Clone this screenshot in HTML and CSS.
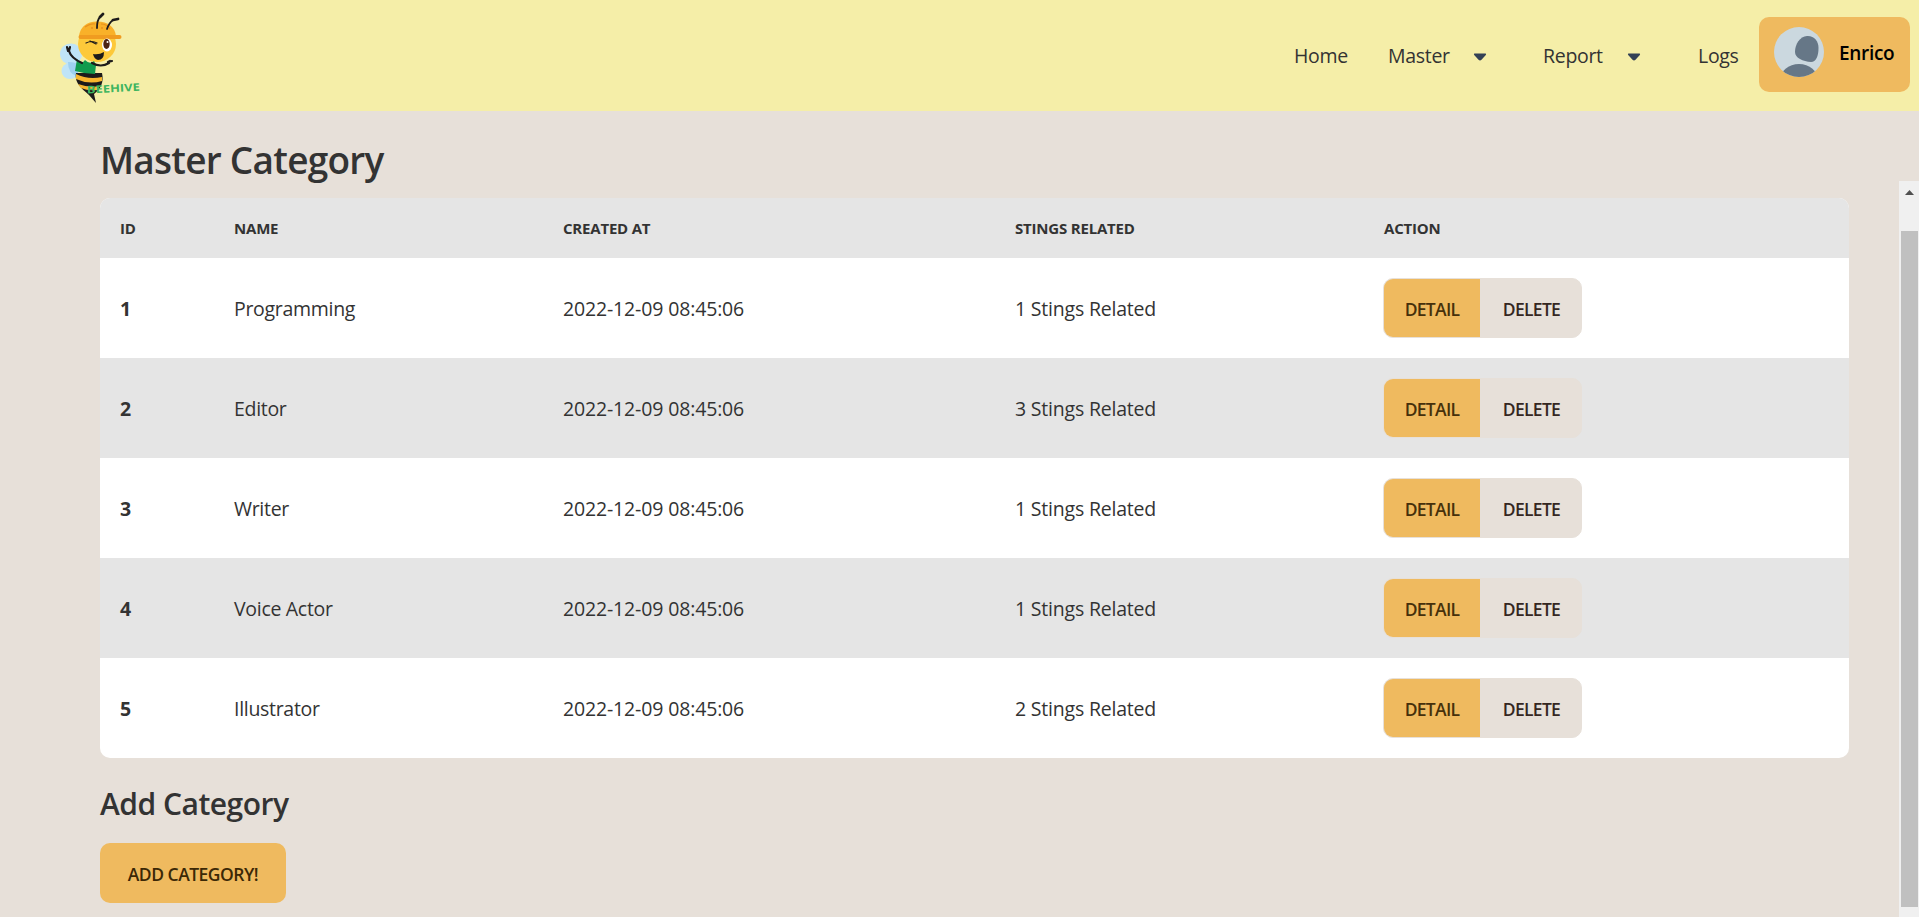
FILE: index.html
```html
<!DOCTYPE html>
<html lang="en">
<head>
<meta charset="utf-8">
<title>Master Category</title>
<link rel="stylesheet" href="styles.css">
</head>
<body>
<header class="navbar">
  <svg class="logo" viewBox="0 0 120 111" width="120" height="111">
    <g fill="#bfe4f7"><ellipse cx="31" cy="54" rx="11" ry="10.5"/><ellipse cx="30" cy="71" rx="8.500" ry="8"/></g>
    <path d="M28 62q9 0 12 4l-3 10q-9-2-9-14z" fill="#9fd0f0"/>
    <path d="M36 73C34 84 44 90 49 95L56 103L54 94C61 89 64 82 62 73Z" fill="#1d1b1b"/>
    <path d="M36 74q12 6 26 3l0 4q-13 4-26-2zM38 84q11 4 22 2l-3 4q-9 1-16-2z" fill="#f8b62d"/>
    <path d="M60 17l3-3M73 20l5-1" stroke="#1d1b1b" stroke-width="2.800" stroke-linecap="round"/>
    <ellipse cx="57" cy="44" rx="19" ry="18" fill="#fdc93a"/>
    <path d="M39 36Q41 22 57 21.500Q74 22 76 36Z" fill="#f9b129"/>
    <path d="M45 27q6-4 10-3M61 24q6 0 9 5" fill="none" stroke="#e8921e" stroke-width="1.200"/>
    <path d="M57 28Q57 20 60 17M67 29Q69 23 73 20" fill="none" stroke="#1d1b1b" stroke-width="1.800" stroke-linecap="round"/>
    <g fill="#e8921e"><circle cx="52" cy="28" r="1"/><circle cx="62" cy="28" r="1"/></g>
    <rect x="38.500" y="35" width="43" height="4" rx="2" fill="#f09c20"/>
    <ellipse cx="67" cy="45" rx="5" ry="6.500" fill="#fff"/><ellipse cx="66.500" cy="44" rx="3.200" ry="5" fill="#4c2414"/><circle cx="67.500" cy="42" r="1" fill="#fff"/>
    <path d="M46 43q6-3 11 0M50 41l6 3" fill="none" stroke="#1d1b1b" stroke-width="1.200" stroke-linecap="round"/>
    <path d="M53 54q6 1 11-2q0 8-6 8q-4-1-5-6z" fill="#1d1b1b"/>
    <path d="M37 59q4 7 8 1q5 5 9 1l2 4l-1 9q-10 0-20-3z" fill="#119b4d"/>
    <path d="M29 51q2 7 13 12M52 63q9 5 17 0M28 51l-1-4M29 51l1-4M68 62l4-1M68 62l2-1" fill="none" stroke="#1d1b1b" stroke-width="2.200" stroke-linecap="round"/>
    <text x="47" y="93.500" class="logo-text" textLength="53" lengthAdjust="spacingAndGlyphs" transform="rotate(-3 47 93)">BEEHIVE</text>
  </svg>
  <nav class="menu">
    <a class="home">Home</a>
    <a class="drop master">Master<svg width="14" height="8" viewBox="0 0 14 8"><path d="M1.500.5h11q1 .5.300 1.500L8.500 6.800q-1.500 1.400-3 0L1.200 2Q.5 1 1.500.5z"/></svg></a>
    <a class="drop report">Report<svg width="14" height="8" viewBox="0 0 14 8"><path d="M1.500.5h11q1 .5.300 1.500L8.500 6.800q-1.500 1.400-3 0L1.200 2Q.5 1 1.500.5z"/></svg></a>
    <a class="logs">Logs</a>
  </nav>
  <div class="user">
    <svg class="avatar" width="50" height="50" viewBox="0 0 50 50">
      <defs><clipPath id="disc"><circle cx="25" cy="25" r="25"/></clipPath></defs>
      <g clip-path="url(#disc)"><rect width="50" height="50" fill="#cbd8df"/><path d="M33 9C40 8.500 44.500 14 44.500 21C44.500 29 42 35 37 35C29 34.500 21 31 21 25C21 17 26 9.500 33 9Z" fill="#667787"/><ellipse cx="25" cy="53" rx="19" ry="16" fill="#667787"/></g>
    </svg>
    <span class="username">Enrico</span>
  </div>
</header>
<main class="page">
  <div class="content">
    <h1>Master Category</h1>
    <table class="grid">
      <colgroup><col class="c-id"><col class="c-name"><col class="c-date"><col class="c-rel"><col></colgroup>
      <thead><tr><th>ID</th><th>NAME</th><th>CREATED AT</th><th>STINGS RELATED</th><th>ACTION</th></tr></thead>
      <tbody>
        <tr><td class="num">1</td><td>Programming</td><td class="date">2022-12-09 08:45:06</td><td class="rel">1 Stings Related</td><td><div class="actions"><a class="detail">DETAIL</a><a class="delete">DELETE</a></div></td></tr>
        <tr><td class="num">2</td><td>Editor</td><td class="date">2022-12-09 08:45:06</td><td class="rel">3 Stings Related</td><td><div class="actions"><a class="detail">DETAIL</a><a class="delete">DELETE</a></div></td></tr>
        <tr><td class="num">3</td><td>Writer</td><td class="date">2022-12-09 08:45:06</td><td class="rel">1 Stings Related</td><td><div class="actions"><a class="detail">DETAIL</a><a class="delete">DELETE</a></div></td></tr>
        <tr><td class="num">4</td><td>Voice Actor</td><td class="date">2022-12-09 08:45:06</td><td class="rel">1 Stings Related</td><td><div class="actions"><a class="detail">DETAIL</a><a class="delete">DELETE</a></div></td></tr>
        <tr><td class="num">5</td><td>Illustrator</td><td class="date">2022-12-09 08:45:06</td><td class="rel">2 Stings Related</td><td><div class="actions"><a class="detail">DETAIL</a><a class="delete">DELETE</a></div></td></tr>
      </tbody>
    </table>
    <h2>Add Category</h2>
    <a class="add">ADD CATEGORY!</a>
  </div>
  <div class="scrollbar">
    <svg width="9" height="5" viewBox="0 0 9 5"><path d="M0 5L4.500 0L9 5z" fill="#505050"/></svg>
    <div class="thumb"></div>
  </div>
</main>
</body>
</html>
```
FILE: styles.css
```css
* { box-sizing: border-box; }
body {
  margin: 0;
  height: 917px;
  overflow: hidden;
  background: #e7e0d9;
  color: #333;
  font-family: "Open Sans", "Noto Sans", sans-serif;
  font-size: 19.5px;
  line-height: 28px;
}
.navbar {
  display: flex;
  height: 111px;
  padding: 0 9px 0 40px;
  background: #f5eea8;
}
.logo-text { font: 700 10.5px "Open Sans", sans-serif; fill: #3db560; }
.menu { display: flex; align-items: flex-start; margin: 42px 20px 0 auto; letter-spacing: -0.3px; }
.menu a { white-space: nowrap; }
.home { width: 94px; }
.drop { display: flex; align-items: center; justify-content: space-between; }
.drop svg { fill: #334155; margin-top: 2px; }
.master { width: 99px; margin-right: 56px; }
.report { width: 98px; margin-right: 57px; }
.logs { width: 41px; }
.user {
  display: flex;
  width: 151px;
  height: 75px;
  margin-top: 17px;
  padding: 10px 15px;
  border-radius: 10px;
  background: #efba5f;
}
.username { margin: 12px 0 0 15px; color: #000; font-weight: 600; font-size: 19px; letter-spacing: -0.3px; }
.page { display: flex; justify-content: space-between; height: 806px; }
.content { width: 1749px; margin-left: 100px; }
h1 { margin: 24px 0 13px; font-size: 37px; line-height: 50px; font-weight: 600; letter-spacing: -0.75px; }
h2 { margin: 28px 0 21px; font-size: 30px; line-height: 36px; font-weight: 600; letter-spacing: -0.5px; }
.grid {
  width: 1749px;
  table-layout: fixed;
  border-spacing: 0;
  border-radius: 10px;
  overflow: hidden;
  background: #fff;
  letter-spacing: -0.3px;
}
.c-id { width: 114px; }
.c-name { width: 329px; }
.c-date { width: 452px; }
.c-rel { width: 369px; }
th { height: 60px; padding: 0 20px 1px; background: #e5e5e5; text-align: left; font-size: 15px; font-weight: 700; letter-spacing: -0.2px; }
td { height: 100px; padding: 2px 20px 0; }
.date { letter-spacing: -0.15px; }
.rel { letter-spacing: -0.2px; }
tbody tr:nth-child(even) { background: #e5e5e5; }
.num { font-weight: 700; }
.actions {
  display: flex;
  width: 199px;
  height: 60px;
  margin: -2px 0 0 -1px;
  border: 1px solid #e7e0d9;
  border-radius: 10px;
  overflow: hidden;
  background: #e7e0d9;
  font-size: 17.500px;
  font-weight: 600;
  line-height: 60px;
  letter-spacing: -0.7px;
}
.actions a { text-align: center; }
.detail { width: 96px; background: #efba5f; color: #46300b; }
.delete { width: 101px; padding-left: 2px; color: #352722; }
.add {
  display: flex;
  align-items: center;
  justify-content: center;
  width: 186px;
  height: 60px;
  padding-top: 2px;
  border-radius: 10px;
  background: #efba5f;
  color: #3b2806;
  font-size: 17.500px;
  font-weight: 600;
  letter-spacing: -0.5px;
}
.scrollbar {
  display: flex;
  flex-direction: column;
  width: 20px;
  height: 736px;
  margin-top: 70px;
  padding: 9px 1px 10px 2px;
  background: #f0f0f0;
}
.scrollbar svg { margin-left: 4px; }
.thumb { flex: 1; margin-top: 36px; background: #c0c0c0; }
```
